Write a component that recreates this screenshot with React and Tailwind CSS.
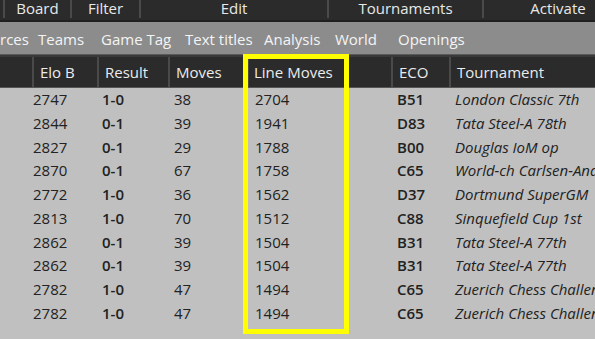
import React from "react";

const cols = [
  { w: 32, h: "", hp: 6 },
  { w: 65, h: "Elo B", hp: 6 },
  { w: 71, h: "Result", hp: 6 },
  { w: 79, h: "Moves", hp: 6 },
  { w: 144, h: "Line Moves", hp: 5 },
  { w: 58, h: "ECO", hp: 6 },
  { w: 160, h: "Tournament", hp: 6 },
];

const rows = [
  ["2747", "1-0", "38", "2704", "B51", "London Classic 7th"],
  ["2844", "0-1", "39", "1941", "D83", "Tata Steel-A 78th"],
  ["2827", "0-1", "29", "1788", "B00", "Douglas IoM op"],
  ["2870", "0-1", "67", "1758", "C65", "World-ch Carlsen-Anand"],
  ["2772", "1-0", "36", "1562", "D37", "Dortmund SuperGM"],
  ["2813", "1-0", "70", "1512", "C88", "Sinquefield Cup 1st"],
  ["2862", "0-1", "39", "1504", "B31", "Tata Steel-A 77th"],
  ["2862", "0-1", "39", "1504", "B31", "Tata Steel-A 77th"],
  ["2782", "1-0", "47", "1494", "C65", "Zuerich Chess Challenge"],
  ["2782", "1-0", "47", "1494", "C65", "Zuerich Chess Challenge"],
];

const menu = [
  { w: 3, t: "" },
  { w: 67, t: "Board" },
  { w: 69, t: "Filter" },
  { w: 188, t: "Edit" },
  { w: 155, t: "Tournaments" },
  { w: 150, t: "Activate" },
];

const tools = [
  { w: 38, t: "rces" },
  { w: 63, t: "Teams" },
  { w: 84, t: "Game Tag" },
  { w: 79, t: "Text titles" },
  { w: 71, t: "Analysis" },
  { w: 63, t: "World" },
  { w: 120, t: "Openings" },
];

export default function App() {
  return (
    <div
      className="relative w-[595px] h-[339px] overflow-hidden bg-[#c0c0c0]"
      style={{ fontFamily: '"Open Sans", "Noto Sans", sans-serif' }}
    >
      {/* menu bar */}
      <div className="flex h-[20px] bg-[#2b2b2b] text-[#e8e8e8] text-[15px] leading-[17px]">
        {menu.map((m, i) => (
          <div
            key={i}
            className={`shrink-0 h-[18px] text-center whitespace-nowrap ${i > 0 ? "border-l-2 border-[#4a4a4a]" : ""}`}
            style={{ width: m.w }}
          >
            {m.t}
          </div>
        ))}
      </div>
      <div className="h-[2px] bg-[#1f1f1f]" />
      {/* toolbar */}
      <div className="flex items-center h-[32px] bg-[#8c8c8c] text-[#f4f4f4] text-[15px] whitespace-nowrap pt-[3px]">
        {tools.map((t, i) => (
          <span key={i} className="shrink-0 block" style={{ width: t.w }}>
            {t.t}
          </span>
        ))}
      </div>
      <div className="h-[1px] bg-[#5a5a5a]" />
      <div className="h-[2px] bg-[#3a3a3a]" />
      {/* header */}
      <div className="flex h-[31px] bg-[#4a4a4a] border-b border-[#555]">
        {cols.map((c, i) => (
          <div
            key={i}
            className={`shrink-0 h-full bg-[#2b2b2b] text-[#ececec] text-[15px] leading-[31px] whitespace-nowrap overflow-hidden ${i > 0 ? "border-l-2 border-[#4a4a4a]" : ""}`}
            style={{ width: c.w, paddingLeft: c.hp }}
          >
            {c.h}
          </div>
        ))}
      </div>
      {/* rows */}
      <div className="flex flex-col text-[15px] text-[#222]">
        {rows.map((r, ri) => (
          <div key={ri} className="flex h-[23.75px] leading-[23.75px] whitespace-nowrap">
            <div className="shrink-0 w-[32px]" />
            <div className="shrink-0 w-[65px] pl-[1px]">{r[0]}</div>
            <div className="shrink-0 w-[71px] pl-[5px] font-semibold">{r[1]}</div>
            <div className="shrink-0 w-[79px] pl-[6px]">{r[2]}</div>
            <div className="shrink-0 w-[144px] pl-[8px]">{r[3]}</div>
            <div className="shrink-0 w-[58px] pl-[6px] font-semibold">{r[4]}</div>
            <div className="shrink-0 w-[160px] pl-[6px] italic overflow-hidden">{r[5]}</div>
          </div>
        ))}
      </div>
      {/* yellow highlight box */}
      <div className="absolute left-[243px] top-[54px] w-[106px] h-[280px] border-[5px] border-[#ffff00]" />
    </div>
  );
}
